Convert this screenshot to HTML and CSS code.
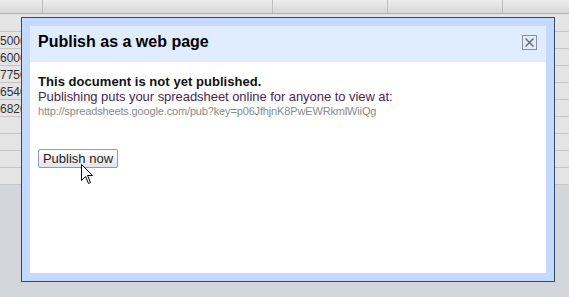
FILE: index.html
```
<!DOCTYPE html>
<html>
<head>
<meta charset="utf-8">
<link rel="stylesheet" href="styles.css">
</head>
<body>
<div class="sheet">
  <div class="hdr">
    <div class="hc c1"></div>
    <div class="hc c2"></div>
    <div class="hc c3"></div>
    <div class="hc c4"></div>
    <div class="hc c5"></div>
  </div>
  <div class="row first"></div>
  <div class="row"><span class="num">5000</span></div>
  <div class="row"><span class="num">6000</span></div>
  <div class="row"><span class="num">7750</span></div>
  <div class="row"><span class="num">6540</span></div>
  <div class="row"><span class="num">6820</span></div>
  <div class="row"></div>
  <div class="row"></div>
  <div class="row"></div>
  <div class="row"></div>
</div>

<div class="dialog">
  <div class="inner">
    <div class="dhead">
      <div class="title">Publish as a web page</div>
      <div class="close">
        <svg width="15" height="15" viewBox="0 0 15 15">
          <rect x="0.5" y="0.5" width="14" height="14" fill="none" stroke="#8a8f96"/>
          <path d="M3.5 3.5 L11.5 11.5 M11.5 3.5 L3.5 11.5" stroke="#6f747a" stroke-width="1.6"/>
        </svg>
      </div>
    </div>
    <div class="dbody">
      <div class="status">This document is not yet published.</div>
      <div class="desc">Publishing puts your spreadsheet online for anyone to view at:</div>
      <div class="url">http://spreadsheets.google.com/pub?key=p06JfhjnK8PwEWRkmlWiiQg</div>
      <button class="pub">Publish now</button>
    </div>
  </div>
</div>

<svg class="cursor" width="13" height="21" viewBox="0 0 13 21">
  <path d="M0.5 0.5 L0.5 16.5 L4.5 12.5 L7.5 19.5 L9.5 18.5 L6.5 11.5 L11.5 11.5 Z" fill="#fff" stroke="#000" stroke-width="1" stroke-linejoin="miter"/>
</svg>
</body>
</html>
```

FILE: styles.css
```
html, body {
  margin: 0;
  padding: 0;
}
body {
  width: 569px;
  height: 297px;
  overflow: hidden;
  position: relative;
  background: #d3d6da;
  font-family: "Liberation Sans", Arial, sans-serif;
}
.sheet {
  width: 569px;
}
.hdr {
  display: flex;
  height: 13px;
  border-bottom: 1px solid #b4b4b4;
  background: linear-gradient(#ededed, #d6d6d6);
}
.hc {
  box-sizing: border-box;
  height: 13px;
  border-right: 1px solid #bdbdbd;
}
.c1 { width: 43px; }
.c2 { width: 230px; }
.c3 { width: 115px; }
.c4 { width: 115px; }
.c5 { flex: 1; border-right: none; }
.row {
  height: 16px;
  border-bottom: 1px solid #c6c6c6;
  background: #e4e4e4;
  font-size: 12px;
  line-height: 16px;
  color: #333;
}
.row.first {
  height: 17px;
}
.num {
  display: block;
  padding-left: 0;
  padding-top: 1px;
}
.dialog {
  position: absolute;
  left: 21px;
  top: 17px;
  width: 534px;
  height: 265px;
  box-sizing: border-box;
  border: 1px solid #34496a;
  background: #c3d9ff;
  padding: 8px;
}
.inner {
  height: 100%;
  background: #fff;
  display: flex;
  flex-direction: column;
}
.dhead {
  height: 36px;
  box-sizing: border-box;
  background: #e0ecff;
  display: flex;
  justify-content: space-between;
  align-items: flex-start;
}
.title {
  font-size: 16px;
  font-weight: bold;
  color: #000;
  line-height: 19px;
  padding: 6px 0 0 8px;
}
.close {
  width: 15px;
  height: 15px;
  margin: 9px 9px 0 0;
}
.close svg {
  display: block;
}
.dbody {
  padding: 12px 8px 0 8px;
  display: flex;
  flex-direction: column;
  align-items: flex-start;
}
.status {
  font-size: 13px;
  font-weight: bold;
  line-height: 15px;
  color: #111;
  letter-spacing: 0.05px;
}
.desc {
  font-size: 13px;
  line-height: 15px;
  color: #4a1f52;
  letter-spacing: -0.05px;
}
.url {
  font-size: 11px;
  line-height: 15px;
  color: #8a8a8a;
  letter-spacing: -0.15px;
}
.pub {
  margin-top: 30px;
  width: 80px;
  height: 19px;
  box-sizing: border-box;
  padding: 0;
  border: 1px solid #8d9db5;
  border-radius: 2px;
  background: linear-gradient(#ffffff, #e2e4ea);
  font-family: "Liberation Sans", Arial, sans-serif;
  font-size: 13px;
  line-height: 15px;
  color: #222;
}
.cursor {
  position: absolute;
  left: 81px;
  top: 164px;
}
```
